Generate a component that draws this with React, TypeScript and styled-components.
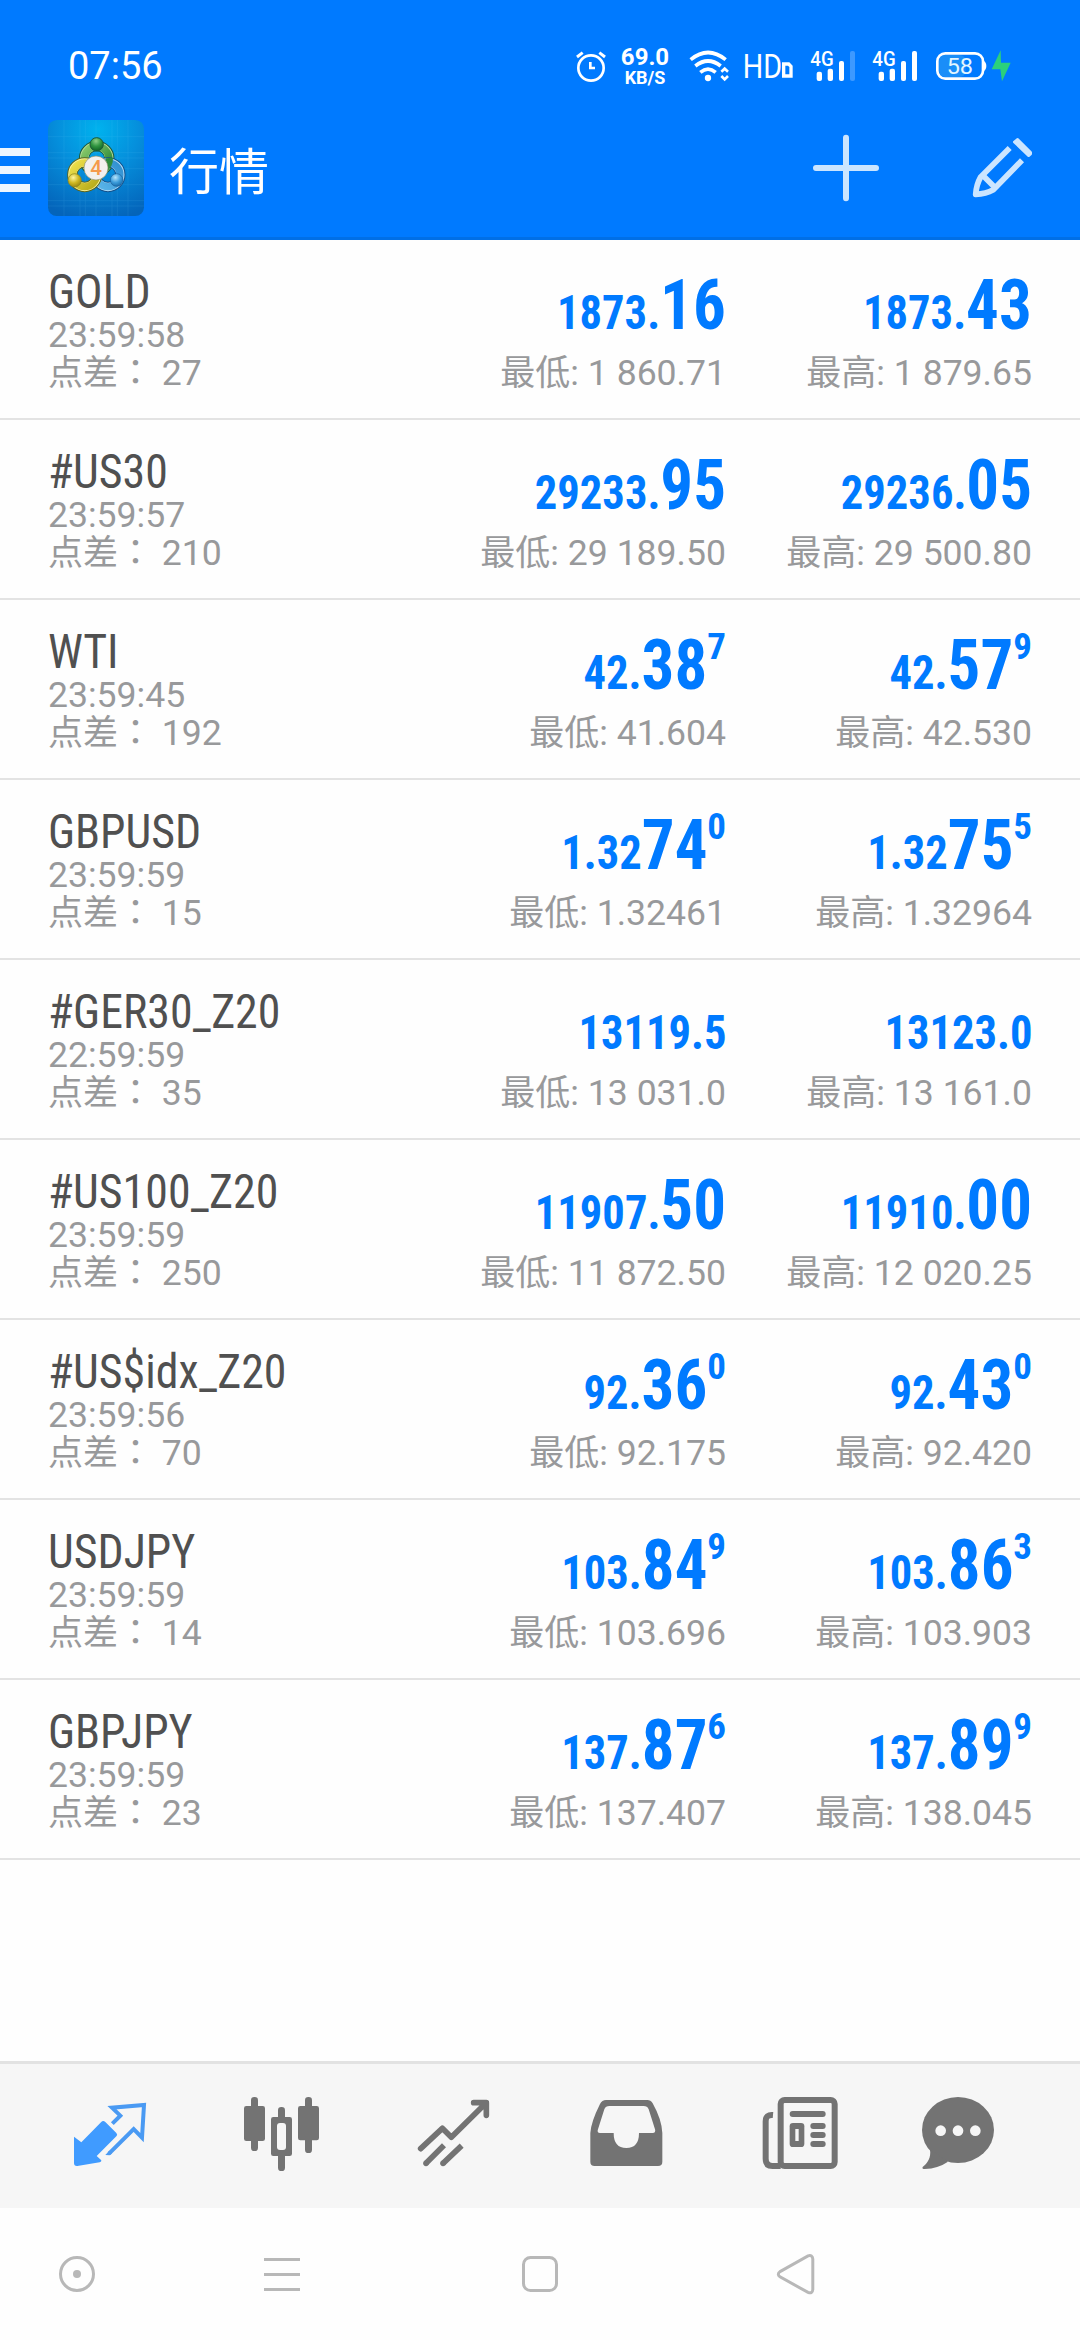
import React from "react";
import styled, { createGlobalStyle } from "styled-components";

const GlobalStyle = createGlobalStyle`
  * { box-sizing: border-box; }
  html, body { margin: 0; padding: 0; background: #fff; }
  body { font-family: Roboto, "Noto Sans CJK SC", sans-serif; }
  svg { display: block; flex: none; }
`;

const Screen = styled.div`
  width: 1080px;
  height: 2340px;
  display: flex;
  flex-direction: column;
  background: #fefefe;
  overflow: hidden;
`;

const Header = styled.header`
  height: 240px;
  flex: none;
  display: flex;
  flex-direction: column;
  background: #007aff;
  border-bottom: 3px solid #006fe6;
`;

const StatusBar = styled.div`
  height: 96px;
  flex: none;
  display: flex;
  align-items: flex-start;
  padding: 46px 69px 0 68px;
  color: #fff;
`;

const Clock = styled.div`
  flex: 1;
  font-size: 38px;
  line-height: 40px;
  white-space: nowrap;
`;

const StatusItem = styled.div<{ $gap: number }>`
  flex: none;
  margin-left: ${(p) => p.$gap}px;
`;

const Speed = styled.div`
  width: 48px;
  display: flex;
  flex-direction: column;
  align-items: center;
  font-weight: 700;
  white-space: nowrap;
`;

const SpeedValue = styled.span`
  font-size: 24px;
  line-height: 23px;
`;

const SpeedUnit = styled.span`
  font-size: 18px;
  line-height: 17px;
`;

const AppBar = styled.div`
  height: 144px;
  flex: none;
  display: flex;
  align-items: center;
  color: #fff;
`;

const MenuButton = styled.div`
  width: 30px;
  margin: 4px 18px 0 0;
  display: flex;
  flex-direction: column;
  gap: 10px;
`;

const MenuBar = styled.span`
  height: 8px;
  background: #eef6ff;
`;

const Title = styled.h1`
  flex: 1;
  margin: 0 0 1px 25px;
  font: 400 50px/60px "Noto Sans CJK SC", sans-serif;
`;

const ActionIcon = styled.div<{ $after: number }>`
  margin-right: ${(p) => p.$after}px;
`;

const List = styled.main`
  flex: 1;
`;

const Row = styled.section`
  height: 180px;
  display: grid;
  grid-template-columns: 342px 336px 306px;
  padding: 0 48px;
  border-bottom: 2px solid #e3e3e3;
`;

const Info = styled.div`
  display: flex;
  flex-direction: column;
  align-items: flex-start;
  padding-top: 26px;
`;

const Quote = styled.div`
  display: flex;
  flex-direction: column;
  align-items: flex-end;
  padding-top: 19px;
`;

const Symbol = styled.div`
  font-family: "Roboto Condensed", Roboto, sans-serif;
  font-stretch: 75%;
  font-size: 48px;
  line-height: 52px;
  color: #505050;
  white-space: nowrap;
  transform: scaleX(0.955);
  transform-origin: left center;
`;

const Small = styled.div<{ $lh: number }>`
  font-size: 35.6px;
  line-height: ${(p) => p.$lh}px;
  height: ${(p) => p.$lh}px;
  color: #98999b;
  white-space: pre;
`;

const Cjk = styled.span`
  font-family: "Noto Sans CJK SC", sans-serif;
  font-size: 35px;
  line-height: 0;
`;

const WideColon = styled(Cjk)`
  font-family: "Noto Sans CJK TC", sans-serif;
`;

const Price = styled.div`
  height: 94px;
  font-family: "Roboto Condensed", Roboto, sans-serif;
  font-stretch: 75%;
  font-weight: 700;
  font-size: 70px;
  line-height: 92px;
  color: #007aff;
  white-space: nowrap;
`;

const PriceMain = styled.span`
  display: inline-block;
  line-height: 1;
  transform: scaleX(0.928);
  transform-origin: right center;
`;

const PriceBase = styled.span`
  font-size: 48px;
`;

const PriceSup = styled.span`
  font-size: 37px;
  line-height: 1;
  position: relative;
  top: -30px;
`;

const TabBar = styled.nav`
  height: 147px;
  flex: none;
  display: grid;
  grid-template-columns: repeat(5, 172px) 148px;
  justify-items: center;
  padding: 31px 48px 0 24px;
  background: #f6f6f6;
  border-top: 3px solid #e2e2e2;
  color: #737373;
`;

const SystemBar = styled.div`
  height: 132px;
  flex: none;
  display: grid;
  grid-template-columns: 154px 256px 260px 252px;
  align-items: center;
  justify-items: center;
`;

const AlarmIcon = () => (
  <svg width="30" height="40" viewBox="18 18 90 120" fill="none" stroke="#fff" strokeWidth="8">
    <circle cx="63" cy="84" r="38" />
    <path d="M61 66V84H75" />
    <path d="M21 51L38 38M88 38L105 51" strokeWidth="9" />
  </svg>
);

const WifiIcon = () => (
  <svg width="41" height="40" viewBox="357 18 123 120" fill="none" stroke="#fff" strokeWidth="11">
    <path d="M362 59Q414 16 467 59" />
    <path d="M376 78Q414 48 452 78" />
    <path d="M391 97Q414 78 437 97" />
    <circle cx="414" cy="114" r="9.5" fill="#fff" stroke="none" />
    <path d="M454 95L464 86L474 95M454 108L464 118L474 108" strokeWidth="8" />
  </svg>
);

const HdIcon = () => (
  <svg width="50" height="40" viewBox="522 18 150 120">
    <text x="518" y="113" fontFamily="Roboto" fontSize="98" fontWeight="400" textLength="118" lengthAdjust="spacingAndGlyphs" fill="#fff">HD</text>
    <path d="M641 72H656L663 79V108H641Z" fill="none" stroke="#fff" strokeWidth="10" />
  </svg>
);

const SignalIcon = ({ full }: { full: boolean }) => (
  <svg width="46" height="40" viewBox="720 18 138 120" fill="#fff">
    <text x="721" y="78" fontFamily="Roboto" fontSize="63" fontWeight="500" textLength="70" lengthAdjust="spacingAndGlyphs">4G</text>
    <rect x="740" y="95" width="16" height="28" rx="6" />
    <rect x="773" y="86" width="16" height="37" rx="6" />
    <rect x="807" y="63" width="15" height="60" rx="6" />
    <rect x="840" y="33" width="15" height="90" rx="6" opacity={full ? 1 : 0.24} />
  </svg>
);

const BatteryIcon = () => (
  <svg width="52" height="40" viewBox="1095 18 156 120">
    <rect x="1107" y="45" width="80" height="66" rx="18" fill="#2b9bf4" opacity=".6" />
    <rect x="1102" y="40" width="137" height="76" rx="24" fill="none" stroke="#fff" strokeWidth="8" />
    <path d="M1240 62Q1249 66 1249 78Q1249 90 1240 94Z" fill="#fff" />
    <text x="1130" y="101" fontFamily="Roboto" fontWeight="400" fontSize="68" textLength="79" lengthAdjust="spacingAndGlyphs" fill="#e4f6ff">58</text>
  </svg>
);

const BoltIcon = () => (
  <svg width="20" height="40" viewBox="1263 18 60 120">
    <path d="M1292 31L1265 88H1291L1296 124L1322 68H1293Z" fill="#2bd07c" />
  </svg>
);

const AppLogo = () => (
  <svg width="96" height="96" viewBox="24 24 288 288">
    <defs>
      <radialGradient id="bg" cx=".52" cy=".1" r=".95">
        <stop offset="0" stopColor="#00b2ee" />
        <stop offset=".45" stopColor="#058fdc" />
        <stop offset="1" stopColor="#0464ba" />
      </radialGradient>
      <linearGradient id="green" x1="0" y1="0" x2="1" y2="1">
        <stop offset="0" stopColor="#8ccb6c" />
        <stop offset="1" stopColor="#1d7f32" />
      </linearGradient>
      <linearGradient id="gold" x1="0" y1="0" x2="1" y2="1">
        <stop offset="0" stopColor="#eee04c" />
        <stop offset="1" stopColor="#b7aa1a" />
      </linearGradient>
      <linearGradient id="sky" x1="1" y1="0" x2="0" y2="1">
        <stop offset="0" stopColor="#2f8fd0" />
        <stop offset="1" stopColor="#5cb6ea" />
      </linearGradient>
      <radialGradient id="greenBall" cx=".45" cy=".25" r=".8">
        <stop offset="0" stopColor="#8fd08a" />
        <stop offset=".5" stopColor="#2f9440" />
        <stop offset="1" stopColor="#0c5a22" />
      </radialGradient>
      <radialGradient id="goldBall" cx=".4" cy=".3" r=".8">
        <stop offset="0" stopColor="#fff6a0" />
        <stop offset=".5" stopColor="#cfb821" />
        <stop offset="1" stopColor="#8b7a10" />
      </radialGradient>
      <radialGradient id="skyBall" cx=".4" cy=".3" r=".8">
        <stop offset="0" stopColor="#b6e4fb" />
        <stop offset=".5" stopColor="#3d9ddb" />
        <stop offset="1" stopColor="#0f5f9f" />
      </radialGradient>
    </defs>
    <rect x="24" y="24" width="288" height="288" rx="26" fill="url(#bg)" />
    <path
      d="M72 24V312M120 24V312M136 24V312M168 24V312M216 24V312M232 24V312M264 24V312M24 74H312M24 122H312M24 138H312M24 170H312M24 218H312M24 266H312M24 282H312"
      stroke="#6fd0ff" strokeWidth="2" opacity=".16"
    />
    <g fill="none">
      <circle cx="170" cy="140" r="38" stroke="#1d5a3a" strokeWidth="31" />
      <circle cx="170" cy="140" r="38" stroke="#b4dc98" strokeWidth="25" />
      <circle cx="170" cy="140" r="37" stroke="url(#green)" strokeWidth="21" />
      <circle cx="204" cy="188" r="37" stroke="#14508a" strokeWidth="31" />
      <circle cx="204" cy="188" r="37" stroke="#b4def8" strokeWidth="25" />
      <circle cx="204" cy="188" r="36" stroke="url(#sky)" strokeWidth="21" />
      <circle cx="134" cy="188" r="37" stroke="#5d651b" strokeWidth="31" />
      <circle cx="134" cy="188" r="37" stroke="#f8f3a2" strokeWidth="25" />
      <circle cx="134" cy="188" r="36" stroke="url(#gold)" strokeWidth="21" />
      <path d="M208 138A38 38 0 0 1 190 172" stroke="#2f8a3c" strokeWidth="22" />
    </g>
    <circle cx="170" cy="97" r="20" fill="url(#greenBall)" stroke="#1d5a3a" strokeWidth="3" />
    <circle cx="104" cy="205" r="20" fill="url(#goldBall)" stroke="#8a8420" strokeWidth="2" />
    <circle cx="230" cy="204" r="19" fill="url(#skyBall)" stroke="#1a5f9a" strokeWidth="2" />
    <circle cx="168" cy="168" r="36" fill="#f3f0ee" stroke="#8b8f6a" strokeWidth="2" />
    <text x="168" y="190" textAnchor="middle" fontFamily="Roboto" fontSize="62" fontWeight="500" fill="#f59a4c">4</text>
  </svg>
);

const PlusIcon = () => (
  <svg width="68" height="68" viewBox="726 282 204 204" stroke="#cbe5ff" strokeWidth="18" strokeLinecap="round">
    <path d="M828 293V475M738 384H918" />
  </svg>
);

const PencilIcon = () => (
  <svg width="64" height="64" viewBox="1200 288 192 192" fill="none" stroke="#cbe5ff" strokeWidth="17">
    <path d="M1319 324L1232 411Q1219 434 1217 463Q1248 461 1270 449L1356 361" strokeLinejoin="round" />
    <path d="M1238 406L1277 445" />
    <path d="M1333 306L1343 298L1382 337V342L1376 347Z" fill="#cbe5ff" strokeWidth="8" strokeLinejoin="round" />
  </svg>
);

const QuotesIcon = () => (
  <svg width="80" height="80" viewBox="30 15 240 240">
    <path d="M42 140L64 157L123 97Q129 90 136 96L169 129Q174 134 169 139L110 198L124 211Q125 216 119 217L52 228Q42 229 42 219Z" fill="#409bff" />
    <path d="M157 101L181 77L156 53L252 45L246 143L221 117L147 191" fill="none" stroke="#4a9af3" strokeWidth="12" />
    <path d="M136 195L148 182L156 190L149 196Z" fill="#4a9af3" />
  </svg>
);

const ChartIcon = () => (
  <svg width="80" height="80" viewBox="546 15 240 240" fill="currentColor">
    <rect x="552" y="48" width="63" height="105" rx="7" />
    <rect x="573" y="21" width="21" height="162" rx="10" />
    <rect x="714" y="48" width="63" height="103" rx="7" />
    <rect x="735" y="21" width="21" height="168" rx="10" />
    <rect x="633" y="81" width="63" height="117" rx="7" />
    <rect x="654" y="51" width="21" height="192" rx="10" />
    <rect x="651" y="99" width="27" height="81" rx="9" fill="#f6f6f6" />
  </svg>
);

const TradeIcon = () => (
  <svg width="80" height="80" viewBox="1062 15 240 240" fill="none" stroke="currentColor" strokeWidth="17">
    <path d="M1082 176L1147 115L1174 142L1278 39M1241 38H1279V76" strokeLinecap="round" strokeLinejoin="round" />
    <path d="M1098 220L1152 166M1149 220L1205 167" />
    <g fill="currentColor" stroke="none">
      <circle cx="1098" cy="220" r="8.5" />
      <circle cx="1149" cy="220" r="8.5" />
    </g>
  </svg>
);

const HistoryIcon = () => (
  <svg width="80" height="80" viewBox="18 15 240 240" fill="currentColor" fillRule="evenodd">
    <path d="M31 129Q33 96 60 42Q66 30 78 30H202Q212 30 218 40Q245 88 247 129V215Q247 228 234 228H44Q31 228 31 215ZM88 48Q77 48 73 58L54 118Q50 129 60 129H101Q101 174 139 174Q177 174 177 129H218Q228 129 225 118L206 58Q202 48 191 48Z" />
  </svg>
);

const NewsIcon = () => (
  <svg width="80" height="80" viewBox="534 15 240 240" fill="currentColor">
    <rect x="602" y="30" width="162" height="198" rx="12" fill="none" stroke="currentColor" strokeWidth="18" />
    <path d="M579 75Q557 73 557 94V206Q557 228 578 228H602" fill="none" stroke="currentColor" strokeWidth="18" />
    <rect x="629" y="63" width="108" height="18" rx="9" />
    <rect x="629" y="99" width="44" height="72" rx="10" />
    <rect x="646" y="117" width="10" height="36" fill="#f6f6f6" />
    <rect x="691" y="99" width="46" height="18" rx="9" />
    <rect x="691" y="126" width="46" height="18" rx="9" />
    <rect x="691" y="153" width="46" height="18" rx="9" />
  </svg>
);

const ChatIcon = () => (
  <svg width="80" height="80" viewBox="1014 15 240 240" fill="currentColor">
    <ellipse cx="1134" cy="120" rx="108" ry="99" />
    <path d="M1050 178C1054 205 1042 220 1028 231Q1025 237 1034 237Q1075 235 1104 215Z" />
    <g fill="#f6f6f6">
      <circle cx="1082" cy="122" r="16" />
      <circle cx="1134" cy="122" r="16" />
      <circle cx="1186" cy="122" r="16" />
    </g>
  </svg>
);

const SystemIcon = ({ children }: { children: React.ReactNode }) => (
  <svg width="42" height="42" viewBox="0 0 42 42" fill="none" stroke="#b8b8b8" strokeWidth="3">
    {children}
  </svg>
);

type Side = [base: string, big: string, sup: string, extreme: string];
type Item = { name: string; time: string; spread: string; bid: Side; ask: Side };

const items: Item[] = [
  { name: "GOLD", time: "23:59:58", spread: "27", bid: ["1873.", "16", "", "1 860.71"], ask: ["1873.", "43", "", "1 879.65"] },
  { name: "#US30", time: "23:59:57", spread: "210", bid: ["29233.", "95", "", "29 189.50"], ask: ["29236.", "05", "", "29 500.80"] },
  { name: "WTI", time: "23:59:45", spread: "192", bid: ["42.", "38", "7", "41.604"], ask: ["42.", "57", "9", "42.530"] },
  { name: "GBPUSD", time: "23:59:59", spread: "15", bid: ["1.32", "74", "0", "1.32461"], ask: ["1.32", "75", "5", "1.32964"] },
  { name: "#GER30_Z20", time: "22:59:59", spread: "35", bid: ["13119.5", "", "", "13 031.0"], ask: ["13123.0", "", "", "13 161.0"] },
  { name: "#US100_Z20", time: "23:59:59", spread: "250", bid: ["11907.", "50", "", "11 872.50"], ask: ["11910.", "00", "", "12 020.25"] },
  { name: "#US$idx_Z20", time: "23:59:56", spread: "70", bid: ["92.", "36", "0", "92.175"], ask: ["92.", "43", "0", "92.420"] },
  { name: "USDJPY", time: "23:59:59", spread: "14", bid: ["103.", "84", "9", "103.696"], ask: ["103.", "86", "3", "103.903"] },
  { name: "GBPJPY", time: "23:59:59", spread: "23", bid: ["137.", "87", "6", "137.407"], ask: ["137.", "89", "9", "138.045"] },
];

const QuoteCell = ({ side, label }: { side: Side; label: string }) => (
  <Quote>
    <Price>
      <PriceMain>
        <PriceBase>{side[0]}</PriceBase>
        {side[1]}
      </PriceMain>
      {side[2] && <PriceSup>{side[2]}</PriceSup>}
    </Price>
    <Small $lh={40}>
      <Cjk>{label}</Cjk>: {side[3]}
    </Small>
  </Quote>
);

export default function App() {
  return (
    <Screen>
      <GlobalStyle />
      <Header>
        <StatusBar>
          <Clock>07:56</Clock>
          <StatusItem $gap={0}><AlarmIcon /></StatusItem>
          <StatusItem $gap={15}>
            <Speed>
              <SpeedValue>69.0</SpeedValue>
              <SpeedUnit>KB/S</SpeedUnit>
            </Speed>
          </StatusItem>
          <StatusItem $gap={20}><WifiIcon /></StatusItem>
          <StatusItem $gap={14}><HdIcon /></StatusItem>
          <StatusItem $gap={16}><SignalIcon full={false} /></StatusItem>
          <StatusItem $gap={16}><SignalIcon full /></StatusItem>
          <StatusItem $gap={17}><BatteryIcon /></StatusItem>
          <StatusItem $gap={4}><BoltIcon /></StatusItem>
        </StatusBar>
        <AppBar>
          <MenuButton>
            <MenuBar />
            <MenuBar />
            <MenuBar />
          </MenuButton>
          <AppLogo />
          <Title>行情</Title>
          <ActionIcon $after={90}><PlusIcon /></ActionIcon>
          <ActionIcon $after={46}><PencilIcon /></ActionIcon>
        </AppBar>
      </Header>
      <List>
        {items.map((item) => (
          <Row key={item.name}>
            <Info>
              <Symbol>{item.name}</Symbol>
              <Small $lh={34}>{item.time}</Small>
              <Small $lh={42}>
                <Cjk>点差</Cjk><WideColon lang="zh-TW">：</WideColon> {item.spread}
              </Small>
            </Info>
            <QuoteCell side={item.bid} label="最低" />
            <QuoteCell side={item.ask} label="最高" />
          </Row>
        ))}
      </List>
      <TabBar>
        <QuotesIcon />
        <ChartIcon />
        <TradeIcon />
        <HistoryIcon />
        <NewsIcon />
        <ChatIcon />
      </TabBar>
      <SystemBar>
        <SystemIcon>
          <circle cx="21" cy="21" r="16.5" />
          <circle cx="21" cy="21" r="4" fill="#b8b8b8" stroke="none" />
        </SystemIcon>
        <SystemIcon>
          <path d="M3 6.5H39M3 21.5H39M3 36.5H39" />
        </SystemIcon>
        <SystemIcon>
          <rect x="4.5" y="4.5" width="33" height="33" rx="7" />
        </SystemIcon>
        <SystemIcon>
          <path d="M5 18.6L33 2.9Q37.5 1.5 37.8 6V36.5Q37.5 41 33 39.4L5 23.8Q1.6 21.2 5 18.6Z" />
        </SystemIcon>
      </SystemBar>
    </Screen>
  );
}
